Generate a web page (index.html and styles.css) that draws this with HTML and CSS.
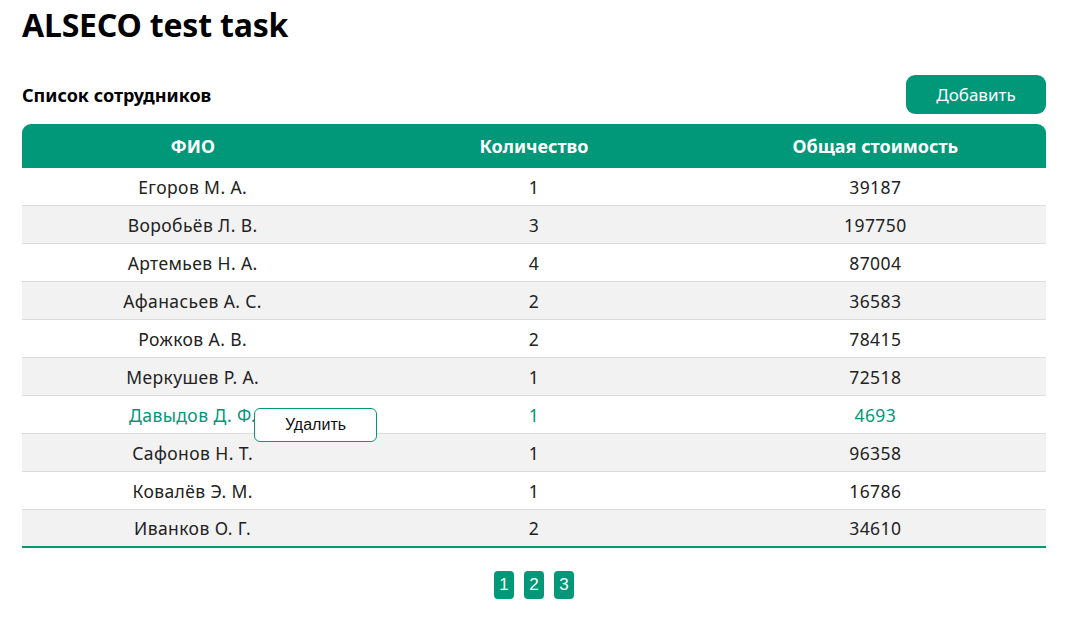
FILE: index.html
```html
<!DOCTYPE html>
<html lang="ru">
<head>
<meta charset="utf-8">
<title>ALSECO test task</title>
<link rel="stylesheet" href="styles.css">
</head>
<body>
<div class="page">
  <h1 class="title">ALSECO test task</h1>
  <div class="toolbar">
    <h2 class="subtitle">Список сотрудников</h2>
    <button class="btn-add">Добавить</button>
  </div>
  <table class="grid">
    <thead>
      <tr><th>ФИО</th><th>Количество</th><th>Общая стоимость</th></tr>
    </thead>
    <tbody>
      <tr><td>Егоров М. А.</td><td>1</td><td>39187</td></tr>
      <tr><td>Воробьёв Л. В.</td><td>3</td><td>197750</td></tr>
      <tr><td>Артемьев Н. А.</td><td>4</td><td>87004</td></tr>
      <tr><td>Афанасьев А. С.</td><td>2</td><td>36583</td></tr>
      <tr><td>Рожков А. В.</td><td>2</td><td>78415</td></tr>
      <tr><td>Меркушев Р. А.</td><td>1</td><td>72518</td></tr>
      <tr class="active"><td><div class="name-cell">Давыдов Д. Ф.<span class="ctx-menu">Удалить</span></div></td><td>1</td><td>4693</td></tr>
      <tr><td>Сафонов Н. Т.</td><td>1</td><td>96358</td></tr>
      <tr><td>Ковалёв Э. М.</td><td>1</td><td>16786</td></tr>
      <tr><td>Иванков О. Г.</td><td>2</td><td>34610</td></tr>
    </tbody>
  </table>
  <div class="pager">
    <button class="page-btn">1</button>
    <button class="page-btn">2</button>
    <button class="page-btn">3</button>
  </div>
</div>
</body>
</html>
```
FILE: styles.css
```css
* { box-sizing: border-box; }
body {
  margin: 0;
  font-family: "Noto Sans", "Open Sans", sans-serif;
  color: #222;
  background: #fff;
}
.page {
  padding: 6px 30px 0 22px;
}
.title {
  margin: 0;
  font-size: 32px;
  line-height: 38px;
  font-weight: 700;
  color: #000;
  letter-spacing: -0.2px;
}
.toolbar {
  display: flex;
  justify-content: space-between;
  align-items: center;
  margin-top: 31px;
  margin-bottom: 10px;
}
.subtitle {
  margin: 0;
  font-size: 18px;
  font-weight: 700;
  color: #000;
}
.btn-add {
  width: 140px;
  height: 39px;
  border: none;
  border-radius: 9px;
  background: #009878;
  color: #fff;
  font-family: inherit;
  font-size: 17px;
}
.grid {
  width: 100%;
  border-collapse: separate;
  border-spacing: 0;
  table-layout: fixed;
}
.grid th {
  background: #009878;
  color: #fff;
  font-weight: 700;
  font-size: 18px;
  height: 44px;
  padding: 0;
}
.grid th:first-child { border-top-left-radius: 9px; }
.grid th:last-child { border-top-right-radius: 9px; }
.grid td {
  height: 38px;
  padding: 0;
  text-align: center;
  font-size: 17.5px;
  letter-spacing: 0.4px;
  color: #222;
  border-bottom: 1px solid #dcdcdc;
}
.grid tbody tr:nth-child(even) td { background: #f2f2f2; }
.grid tbody tr:last-child td { border-bottom: 2px solid #009878; }
.grid tr.active td { color: #009878; }
.name-cell { position: relative; }
.ctx-menu {
  position: absolute;
  left: 232px;
  top: 5px;
  width: 123px;
  height: 34px;
  line-height: 32px;
  background: #fff;
  border: 1px solid #009878;
  border-radius: 6px;
  color: #111;
  font-family: "Liberation Sans", Arial, sans-serif;
  font-size: 16px;
  letter-spacing: 0;
  text-align: center;
}
.pager {
  display: flex;
  justify-content: center;
  gap: 10px;
  margin-top: 23px;
}
.page-btn {
  width: 20px;
  height: 28px;
  padding: 0;
  border: none;
  border-radius: 4px;
  background: #009878;
  color: #fff;
  font-family: "Liberation Sans", Arial, sans-serif;
  font-size: 17px;
}
```
